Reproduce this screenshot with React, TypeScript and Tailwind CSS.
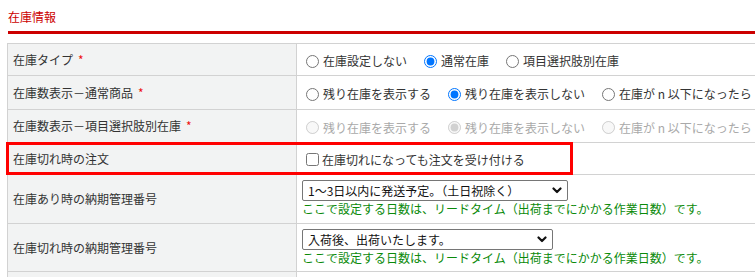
import React from "react";

const font = { fontFamily: '"Noto Sans CJK JP", "Noto Sans", sans-serif' };

function Req() {
  return <span className="ml-[5px] text-[#ee1111] text-[12px]">*</span>;
}

function Chevron() {
  return (
    <svg width="10" height="7" viewBox="0 0 10 7" className="block">
      <path d="M1.5 1.5 L5 5 L8.5 1.5" fill="none" stroke="#111" strokeWidth="2.2" strokeLinecap="round" strokeLinejoin="round" />
    </svg>
  );
}

type Opt = { label: string; checked?: boolean };

function RadioGroup({ name, options, disabled }: { name: string; options: Opt[]; disabled?: boolean }) {
  return (
    <div className="flex items-center gap-[17px] whitespace-nowrap">
      {options.map((o) => (
        <label key={o.label} className={`flex items-center gap-[4px] ${disabled ? "text-[#a9a9a9]" : "text-[#333]"}`}>
          <input
            type="radio"
            name={name}
            defaultChecked={o.checked}
            disabled={disabled}
            className="m-0 w-[13px] h-[13px]"
          />
          <span>{o.label}</span>
        </label>
      ))}
    </div>
  );
}

function FakeSelect({ text, width }: { text: string; width: string }) {
  return (
    <div className={`${width} h-[21px] flex items-center justify-between border border-[#767676] rounded-[2px] bg-white pl-[5px] pr-[5px] text-[#111]`}>
      <span className="whitespace-nowrap">{text}</span>
      <Chevron />
    </div>
  );
}

function Row({ h, label, children, rightClass }: { h: string; label: React.ReactNode; children?: React.ReactNode; rightClass?: string }) {
  return (
    <div className={`flex ${h} border-b border-[#d2d2d2]`}>
      <div className="w-[289px] shrink-0 bg-[#f2f3f3] border-r border-[#d2d2d2] flex items-center pl-[5px] text-[#333] whitespace-nowrap">
        {label}
      </div>
      <div className={`flex-1 pl-[5px] ${rightClass ?? ""}`}>{children}</div>
    </div>
  );
}

export default function App() {
  const note = "ここで設定する日数は、リードタイム（出荷までにかかる作業日数）です。";
  return (
    <div className="w-[755px] h-[277px] overflow-hidden bg-white text-[12px]" style={font}>
      <div className="pl-[8px] pt-[8px] leading-[18px] text-[#cc0000] text-[12px]">在庫情報</div>
      <div className="ml-[8px] mt-[5px] h-[3px] bg-[#cc0000]" />
      <div className="ml-[7px] mt-[9px] w-[770px] border-t border-l border-[#d2d2d2] leading-[16px]">
        <Row h="h-[32px]" label={<><span>在庫タイプ</span><Req /></>} rightClass="flex items-center pt-[3px] pl-[9px]">
          <RadioGroup
            name="type"
            options={[{ label: "在庫設定しない" }, { label: "通常在庫", checked: true }, { label: "項目選択肢別在庫" }]}
          />
        </Row>
        <Row h="h-[34px]" label={<><span>在庫数表示－通常商品</span><Req /></>} rightClass="flex items-center pt-[3px] pl-[9px]">
          <RadioGroup
            name="disp1"
            options={[{ label: "残り在庫を表示する" }, { label: "残り在庫を表示しない", checked: true }, { label: "在庫が n 以下になったら" }]}
          />
        </Row>
        <Row h="h-[33px]" label={<><span>在庫数表示－項目選択肢別在庫</span><Req /></>} rightClass="flex items-center pt-[3px] pl-[9px]">
          <RadioGroup
            name="disp2"
            disabled
            options={[{ label: "残り在庫を表示する" }, { label: "残り在庫を表示しない", checked: true }, { label: "在庫が n 以下になったら" }]}
          />
        </Row>
        <div className="relative">
          <Row h="h-[32px]" label="在庫切れ時の注文" rightClass="flex items-center pt-[2px] pl-[9px]">
            <label className="flex items-center gap-[3px] text-[#333] whitespace-nowrap">
              <input type="checkbox" className="m-0 w-[13px] h-[13px]" />
              <span>在庫切れになっても注文を受け付ける</span>
            </label>
          </Row>
          <div className="absolute left-[-2px] top-[-1px] w-[567px] h-[33px] border-[3px] border-[#ff0000] pointer-events-none" />
        </div>
        <Row h="h-[49px]" label="在庫あり時の納期管理番号" rightClass="flex flex-col items-start pt-[5px]">
          <FakeSelect text="1〜3日以内に発送予定。（土日祝除く）" width="w-[266px]" />
          <div className="text-[#0a8a0a] whitespace-nowrap leading-[16px]">{note}</div>
        </Row>
        <Row h="h-[48px]" label="在庫切れ時の納期管理番号" rightClass="flex flex-col items-start pt-[5px]">
          <FakeSelect text="入荷後、出荷いたします。" width="w-[251px]" />
          <div className="text-[#0a8a0a] whitespace-nowrap leading-[16px]">{note}</div>
        </Row>
        <Row h="h-[40px]" label="" />
      </div>
    </div>
  );
}
